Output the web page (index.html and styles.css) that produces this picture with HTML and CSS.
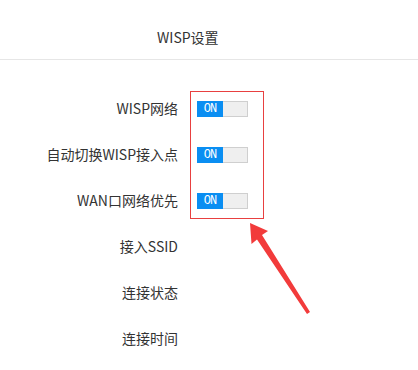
FILE: index.html
```html
<!DOCTYPE html>
<html>
<head>
<meta charset="utf-8">
<link rel="stylesheet" href="styles.css">
</head>
<body>
<div class="page">
  <div class="header"><span class="title">WISP设置</span></div>
  <div class="form">
    <div class="row"><div class="label">WISP网络</div><div class="value"><span class="toggle"><span class="on">ON</span><span class="off"></span></span></div></div>
    <div class="row"><div class="label">自动切换WISP接入点</div><div class="value"><span class="toggle"><span class="on">ON</span><span class="off"></span></span></div></div>
    <div class="row"><div class="label">WAN口网络优先</div><div class="value"><span class="toggle"><span class="on">ON</span><span class="off"></span></span></div></div>
    <div class="row"><div class="label">接入SSID</div><div class="value"></div></div>
    <div class="row"><div class="label">连接状态</div><div class="value"></div></div>
    <div class="row"><div class="label">连接时间</div><div class="value"></div></div>
  </div>
  <div class="highlight"></div>
  <svg class="arrow" width="418" height="370" viewBox="0 0 418 370">
    <polygon points="250,223 251.5,244 257,239.5 307,314 310,312 262,235 268,231" fill="#f23b3b"/>
  </svg>
</div>
</body>
</html>
```
FILE: styles.css
```css
html, body {
  margin: 0;
  padding: 0;
  background: #fff;
}
body {
  font-family: "Noto Sans CJK SC", "Liberation Sans", sans-serif;
  color: #333;
  font-size: 14px;
}
.page {
  position: relative;
  width: 418px;
  height: 370px;
  overflow: hidden;
}
.header {
  height: 59px;
  border-bottom: 1px solid #e6e6e6;
  display: flex;
  align-items: center;
  padding-left: 157px;
}
.title {
  font-size: 14px;
  line-height: 20px;
  margin-top: 15px;
}
.form {
  padding-top: 26px;
}
.row {
  display: flex;
  align-items: center;
  height: 46px;
}
.label {
  width: 178px;
  text-align: right;
  line-height: 20px;
  margin-top: -2px;
}
.value {
  margin-left: 19px;
  display: flex;
  align-items: center;
}
.toggle {
  display: flex;
  width: 51px;
  height: 16px;
}
.on {
  width: 26px;
  height: 16px;
  background: #0a8ef2;
  color: #fff;
  font-family: "Liberation Mono", monospace;
  font-size: 12px;
  letter-spacing: -1px;
  line-height: 16px;
  text-align: center;
}
.off {
  flex: 1;
  height: 14px;
  background: #efefef;
  border: 1px solid #cfcfcf;
  border-left: none;
}
.highlight {
  position: absolute;
  left: 190px;
  top: 91px;
  width: 72px;
  height: 126px;
  border: 1px solid #e84040;
}
.arrow {
  position: absolute;
  left: 0;
  top: 0;
}
```
